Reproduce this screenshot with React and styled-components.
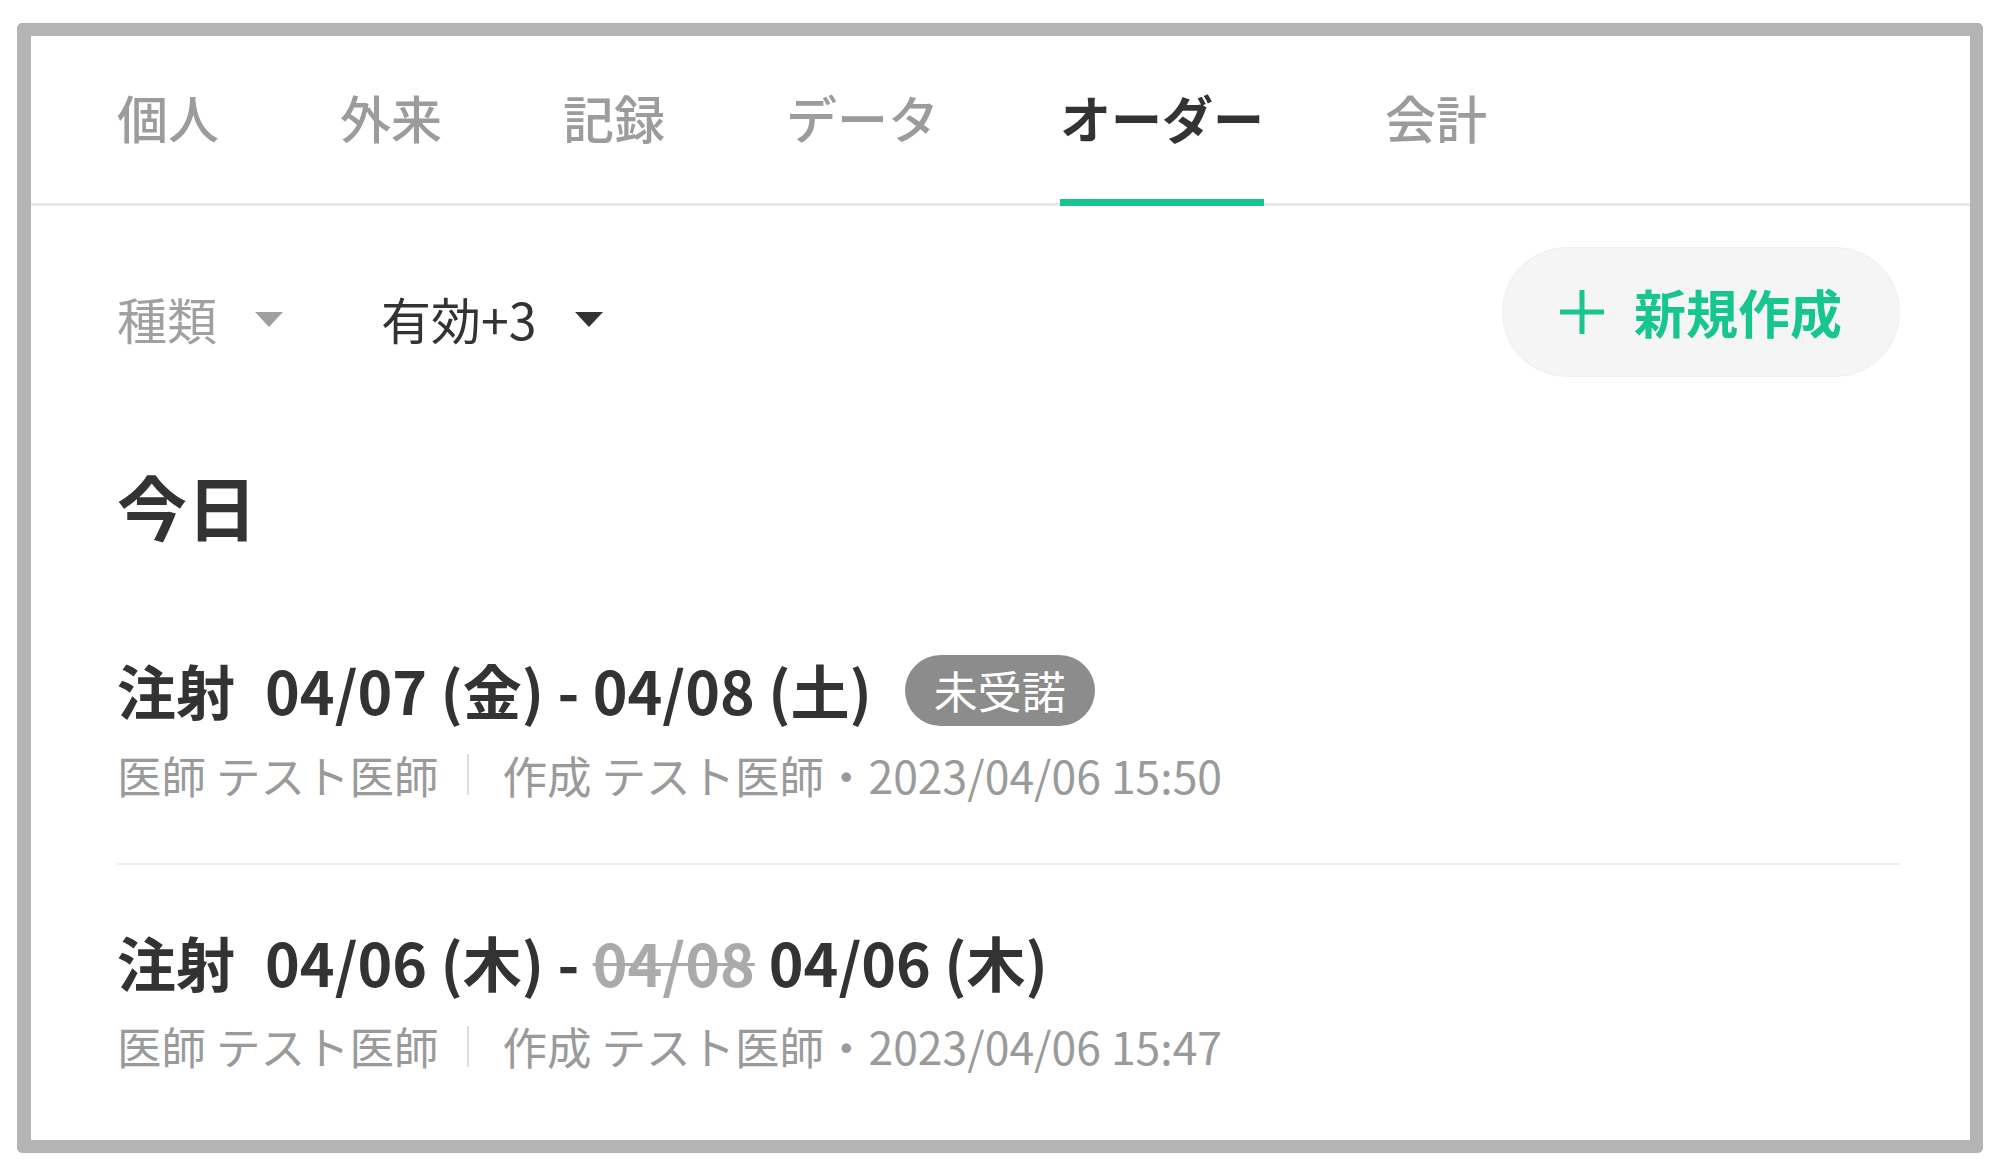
import React from 'react'
import styled, {createGlobalStyle} from 'styled-components'

const GlobalStyle = createGlobalStyle`
html, body {
margin: 0;
padding: 0;
background: #fff;
}
body {
font-family: "Noto Sans CJK JP", "Noto Sans", sans-serif;
color: #333;
}
`

const Frame = styled.div`
box-sizing: border-box;
margin: 23px 0 0 17px;
width: 1966px;
height: 1130px;
border-style: solid;
border-color: #b4b4b4;
border-width: 13px 13px 13px 14px;
border-radius: 5px;
background: #fff;
overflow: hidden;
`

const TabBar = styled.div`
display: flex;
gap: 121px;
height: 170px;
box-sizing: border-box;
padding-left: 86px;
border-bottom: 3px solid #e8e8e8;
`

const Tab = styled.div`
position: relative;
display: flex;
align-items: center;
font-size: 51px;
font-weight: ${p => (p.$active ? 700 : 500)};
color: ${p => (p.$active ? '#333' : '#9c9c9c')};
line-height: 1;
padding-bottom: 4px;

&::after {
content: '';
display: ${p => (p.$active ? 'block' : 'none')};
position: absolute;
left: 0;
right: 0;
bottom: -3px;
height: 7px;
background: #17c68e;
}
`

const Content = styled.div`
padding: 0 70px 0 86px;
`

const FilterRow = styled.div`
display: flex;
align-items: center;
justify-content: space-between;
padding-top: 41px;
`

const Filters = styled.div`
display: flex;
align-items: center;
gap: 98px;
margin-top: 11px;
`

const Filter = styled.div`
display: flex;
align-items: center;
gap: 38px;
font-size: 50px;
line-height: 1.2;
color: ${p => (p.$muted ? '#a0a0a0' : '#333')};
`

const Caret = styled.span`
width: 0;
height: 0;
border-left: 14px solid transparent;
border-right: 14px solid transparent;
border-top: 15px solid ${p => (p.$muted ? '#a0a0a0' : '#333')};
margin-top: 4px;
`

const NewButton = styled.button`
display: flex;
align-items: center;
gap: 28px;
height: 130px;
padding: 0 57px 0 55px;
border: 1px solid #efefef;
border-radius: 65px;
background: #f5f5f5;
color: #17c68e;
font-family: inherit;
font-size: 52px;
font-weight: 700;
line-height: 1;
cursor: pointer;

svg {
width: 48px;
height: 48px;
}
`

const Heading = styled.h2`
margin: 80px 0 38px;
font-size: 70px;
font-weight: 700;
line-height: 1.4;
color: #333;
`

const OrderItem = styled.div`
padding: 56px 0 57px;
border-bottom: ${p => (p.$last ? 'none' : '2px solid #eeeeee')};
`

const OrderTitle = styled.div`
display: flex;
align-items: center;
font-size: 59px;
font-weight: 700;
line-height: 1.4;
color: #333;
`

const Kind = styled.span`
margin-right: 30px;
`

const Struck = styled.span`
color: #aaa;
text-decoration: line-through;
text-decoration-thickness: 3px;
margin: 0 14px 0 0;
`

const Badge = styled.span`
display: inline-flex;
align-items: center;
height: 71px;
padding: 0 29px;
margin-left: 33px;
border-radius: 36px;
background: #8c8c8c;
color: #fff;
font-size: 44px;
font-weight: 400;
line-height: 1;
`

const Meta = styled.div`
display: flex;
align-items: center;
margin-top: 12px;
font-size: 44.5px;
line-height: 1.4;
color: #9a9a9a;
`

const Sep = styled.span`
width: 2px;
height: 41px;
background: #dddddd;
margin: 0 33px 0 29px;
`

const PlusIcon = () => (
    <svg viewBox="0 0 48 48" fill="none" stroke="currentColor" strokeWidth="5" strokeLinecap="butt">
        <line x1="24" y1="2" x2="24" y2="46" />
        <line x1="2" y1="24" x2="46" y2="24" />
    </svg>
)

const tabs = ['個人', '外来', '記録', 'データ', 'オーダー', '会計']

const App = () => {
    return (
        <>
            <GlobalStyle />
            <Frame>
                <TabBar>
                    {tabs.map(t => (
                        <Tab key={t} $active={t === 'オーダー'}>{t}</Tab>
                    ))}
                </TabBar>
                <Content>
                    <FilterRow>
                        <Filters>
                            <Filter $muted>種類<Caret $muted /></Filter>
                            <Filter>有効+3<Caret /></Filter>
                        </Filters>
                        <NewButton><PlusIcon />新規作成</NewButton>
                    </FilterRow>

                    <Heading>今日</Heading>

                    <div>
                        <OrderItem>
                            <OrderTitle>
                                <Kind>注射</Kind>
                                <span>04/07 (金) - 04/08 (土)</span>
                                <Badge>未受諾</Badge>
                            </OrderTitle>
                            <Meta>
                                医師 テスト医師<Sep />作成 テスト医師・2023/04/06 15:50
                            </Meta>
                        </OrderItem>
                        <OrderItem $last>
                            <OrderTitle>
                                <Kind>注射</Kind>
                                <span>04/06 (木) -&nbsp;</span>
                                <Struck>04/08</Struck>
                                <span>04/06 (木)</span>
                            </OrderTitle>
                            <Meta>
                                医師 テスト医師<Sep />作成 テスト医師・2023/04/06 15:47
                            </Meta>
                        </OrderItem>
                    </div>
                </Content>
            </Frame>
        </>
    )
}

export default App
